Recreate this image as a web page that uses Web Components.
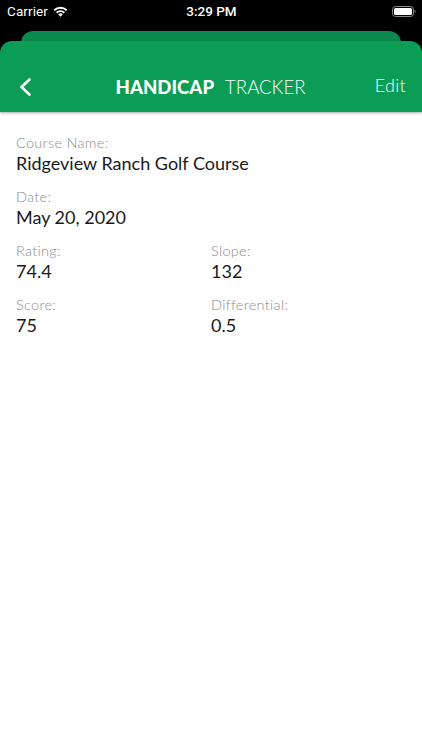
<!DOCTYPE html>
<html>
<head>
<meta charset="utf-8">
<title>Handicap Tracker</title>
<style>
  html, body { margin: 0; height: 100%; background: #fff; }
  body { font-family: 'Lato', sans-serif; overflow: hidden; }
</style>
</head>
<body>
<score-app>
  <status-bar slot="status"></status-bar>
  <nav-header slot="header"></nav-header>
  <score-field label="Course Name:" value="Ridgeview Ranch Golf Course"></score-field>
  <score-field label="Date:" value="May 20, 2020"></score-field>
  <score-field-pair>
    <score-field label="Rating:" value="74.4"></score-field>
    <score-field label="Slope:" value="132"></score-field>
  </score-field-pair>
  <score-field-pair>
    <score-field label="Score:" value="75"></score-field>
    <score-field label="Differential:" value="0.5"></score-field>
  </score-field-pair>
</score-app>

<script>
class ScoreApp extends HTMLElement {
  constructor() {
    super();
    this.attachShadow({ mode: 'open' });
    this.shadowRoot.innerHTML = `
      <style>
        :host { display: flex; flex-direction: column; width: 422px; height: 750px; background: #fff; }
        .top { background: #000; flex-shrink: 0; }
        .content { display: flex; flex-direction: column; gap: 13px; padding: 22px 16px 0; }
      </style>
      <div class="top">
        <slot name="status"></slot>
        <slot name="header"></slot>
      </div>
      <div class="content"><slot></slot></div>
    `;
  }
}

class StatusBar extends HTMLElement {
  constructor() {
    super();
    this.attachShadow({ mode: 'open' });
    this.shadowRoot.innerHTML = `
      <style>
        :host { display: grid; grid-template-columns: 1fr auto 1fr; align-items: center; height: 22px; padding: 0 6px 0 7px; color: #fff; font: 13.5px/22px 'Roboto', sans-serif; }
        .left { display: flex; align-items: center; gap: 5px; letter-spacing: .1px; }
        .time { font-weight: 500; }
        .right { display: flex; justify-content: flex-end; }
        svg { display: block; }
      </style>
      <div class="left">
        <span>Carrier</span>
        <svg width="15" height="11" viewBox="0 0 15 11">
          <path d="M.6 3.6a10 10 0 0 1 13.8 0l-1.3 1.4a8.1 8.1 0 0 0-11.2 0z" fill="#fff"/>
          <path d="M3 6a6.6 6.6 0 0 1 9 0l-1.3 1.4a4.7 4.7 0 0 0-6.4 0z" fill="#fff"/>
          <path d="M5.3 8.4a3.2 3.2 0 0 1 4.4 0l-2.2 2.3z" fill="#fff"/>
        </svg>
      </div>
      <span class="time">3:29 PM</span>
      <div class="right">
        <svg width="24" height="11" viewBox="0 0 24 11">
          <rect x=".5" y=".5" width="21" height="10" rx="3" fill="none" stroke="#8a8a8a"/>
          <rect x="2" y="2" width="18" height="7" rx="1.6" fill="#fff"/>
          <path d="M22.7 4v3c.6-.2 1-.8 1-1.5s-.4-1.300-1-1.500z" fill="#8a8a8a"/>
        </svg>
      </div>
    `;
  }
}

class NavHeader extends HTMLElement {
  constructor() {
    super();
    this.attachShadow({ mode: 'open' });
    this.shadowRoot.innerHTML = `
      <style>
        :host { display: block; padding-top: 9px; }
        .back-sheet { height: 20px; margin: 0 21px -10px; background: #0a8a4f; border-radius: 12px 12px 0 0; }
        .bar {
          position: relative; display: grid; grid-template-columns: 1fr auto 1fr; align-items: center;
          height: 71px; padding: 0 16px 0 19px; box-sizing: border-box;
          background: #0b9c56; border-radius: 12px 12px 0 0; color: #fff;
          box-shadow: 0 1px 3px rgba(0,0,0,.35);
        }
        .title { font-size: 18.6px; padding-top: 20px; line-height: 24px; margin-right: 4px; }
        .title b { font-weight: 900; margin-right: 11px; }
        .title span { font-weight: 300; }
        .back { display: block; padding-top: 20px; }
        .edit { justify-self: end; font-size: 18px; font-weight: 300; line-height: 24px; padding-top: 16px; letter-spacing: .3px; }
      </style>
      <div class="back-sheet"></div>
      <div class="bar">
        <svg class="back" width="13" height="18" viewBox="0 0 13 18">
          <path d="M10.500 1.500 2.500 9l8 7.500" fill="none" stroke="#fff" stroke-width="2.600" stroke-linecap="round" stroke-linejoin="round"/>
        </svg>
        <div class="title"><b>HANDICAP</b><span>TRACKER</span></div>
        <div class="edit">Edit</div>
      </div>
    `;
  }
}

const fieldTemplate = document.createElement('template');
fieldTemplate.innerHTML = `
  <style>
    :host { display: block; }
    .label { font-size: 14.500px; line-height: 18px; margin-bottom: -1px; color: #8c8c8c; font-weight: 300; letter-spacing: .3px; }
    .value { font-size: 18px; line-height: 24px; color: #1a1a1a; font-weight: 400; }
  </style>
  <div class="label"></div>
  <div class="value"></div>
`;

class ScoreField extends HTMLElement {
  constructor() {
    super();
    this.attachShadow({ mode: 'open' });
    this.shadowRoot.appendChild(fieldTemplate.content.cloneNode(true));
  }

  connectedCallback() {
    this.shadowRoot.querySelector('.label').textContent = this.getAttribute('label');
    this.shadowRoot.querySelector('.value').textContent = this.getAttribute('value');
  }
}

class ScoreFieldPair extends HTMLElement {
  constructor() {
    super();
    this.attachShadow({ mode: 'open' });
    this.shadowRoot.innerHTML = `
      <style>
        :host { display: grid; grid-template-columns: 195px 1fr; }
      </style>
      <slot></slot>
    `;
  }
}

customElements.define('score-app', ScoreApp);
customElements.define('status-bar', StatusBar);
customElements.define('nav-header', NavHeader);
customElements.define('score-field', ScoreField);
customElements.define('score-field-pair', ScoreFieldPair);
</script>
</body>
</html>
